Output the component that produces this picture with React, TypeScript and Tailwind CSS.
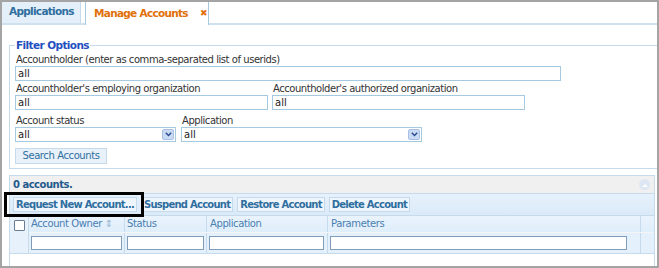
import React from "react";

const font = { fontFamily: '"DejaVu Sans", Verdana, sans-serif' };

function Field({ label, width, className = "" }: { label: string; width: string; className?: string }) {
  return (
    <div className={"flex flex-col " + className}>
      <div className="text-[10px] leading-[12px] tracking-[-0.45px] text-[#333] pl-[1px]">{label}</div>
      <div className={"h-[15px] border border-[#a6c9e2] bg-white text-[10px] leading-[13px] pl-[2px] text-[#222] " + width}>all</div>
    </div>
  );
}

function SelectBox({ label, width, className = "" }: { label: string; width: string; className?: string }) {
  return (
    <div className={"flex flex-col " + className}>
      <div className="text-[10px] leading-[12px] tracking-[-0.45px] text-[#333] pl-[1px]">{label}</div>
      <div className={"h-[15px] border border-[#a6c9e2] bg-white flex items-center justify-between " + width}>
        <span className="text-[10px] leading-[13px] pl-[2px] text-[#222]">all</span>
        <span className="w-[12px] h-[11px] mr-[1px] bg-[#c9daf3] border border-[#a9c0e6] rounded-[2px] flex items-center justify-center">
          <svg width="7" height="5" viewBox="0 0 7 5"><path d="M0.8 0.8 L3.5 3.6 L6.2 0.8" stroke="#2a4a90" strokeWidth="1.4" fill="none" /></svg>
        </span>
      </div>
    </div>
  );
}

function TbBtn({ children }: { children: React.ReactNode }) {
  return (
    <div className="h-[15px] px-[2px] border border-[#c5dbec] bg-[#eef5fd] text-[10px] leading-[13px] tracking-[-0.75px] font-bold text-[#2e6e9e] whitespace-nowrap">
      {children}
    </div>
  );
}

export default function App() {
  return (
    <div className="w-[659px] h-[268px] bg-[#a4a4a4] pt-[2px] pl-[2px] pr-[2px] pb-[2px]" style={font}>
      <div className="relative w-full h-full bg-white overflow-hidden flex flex-col">
        {/* tabs */}
        <div className="h-[23px] flex items-end border-b-2 border-[#cfe0ee] shrink-0">
          <div className="h-[23px] w-[79px] shrink-0 bg-[#e4eff9] border border-[#c5dbec] border-l-0 border-b-0 flex items-center pl-[7px] text-[10.5px] tracking-[-0.7px] font-bold text-[#2e6e9e] whitespace-nowrap">
            Applications
          </div>
          <div className="ml-[4px] w-[124px] shrink-0 overflow-hidden bg-white border border-[#a6c9e2] border-b-0 -mb-[2px] h-[24px] flex items-center pl-[8px] text-[10.5px] tracking-[-0.7px] font-bold text-[#e17009] whitespace-nowrap">
            <span>Manage Accounts</span>
            <span className="ml-[12px] text-[9px]">✖</span>
          </div>
        </div>

        {/* filter fieldset */}
        <fieldset className="mt-[14px] ml-[7px] mr-[-10px] border border-[#c5dbec] px-[5px] pb-[4px] shrink-0">
          <legend className="px-[1px] text-[10.5px] tracking-[-0.6px] font-bold text-[#1f4fbf] leading-[12px]">Filter Options</legend>
          <Field label="Accountholder (enter as comma-separated list of userids)" width="w-[546px]" className="mt-[3px]" />
          <div className="flex gap-[4px] mt-[2px]">
            <Field label="Accountholder's employing organization" width="w-[253px]" />
            <Field label="Accountholder's authorized organization" width="w-[253px]" />
          </div>
          <div className="flex gap-[5px] mt-[5px]">
            <SelectBox label="Account status" width="w-[161px]" />
            <SelectBox label="Application" width="w-[241px]" />
          </div>
          <div className="mt-[6px] w-[92px] h-[16px] border border-[#c5dbec] bg-[#e8f1fa] text-[10px] leading-[14px] tracking-[-0.4px] text-[#2e6e9e] flex items-center justify-center">
            Search Accounts
          </div>
        </fieldset>

        {/* grid */}
        <div className="mt-[6px] ml-[7px] mr-[2px] border border-[#c5dbec] border-b-0 flex-1 flex flex-col">
          <div className="h-[18px] bg-[#f0f0f0] flex items-center justify-between px-[3px] border-b border-[#c5dbec]">
            <span className="text-[10px] tracking-[-0.5px] font-bold text-[#1f5a8c]">0 accounts.</span>
            <span className="w-[11px] h-[11px] rounded-full bg-[#dde7f3] mr-[1px] flex items-center justify-center">
              <svg width="6" height="4" viewBox="0 0 6 4"><path d="M0 4 L3 1 L6 4 Z" fill="#fff" /></svg>
            </span>
          </div>
          <div className="h-[22px] bg-gradient-to-b from-[#e6f1fc] to-[#dbeaf8] flex items-center gap-[4px] px-[3px] border-b border-[#c5dbec]">
            <TbBtn>Request New Account...</TbBtn>
            <TbBtn>Suspend Account</TbBtn>
            <TbBtn>Restore Account</TbBtn>
            <TbBtn>Delete Account</TbBtn>
          </div>
          <div className="flex bg-[#e6f1fc] border-b border-[#c5dbec]">
            <div className="w-[19px] flex flex-col items-center border-r border-[#c5dbec]">
              <div className="mt-[4px] w-[11px] h-[11px] border border-[#6a7d92] bg-white rounded-[1px]" />
            </div>
            <div className="flex-1 flex flex-col">
              <div className="flex h-[16px] bg-gradient-to-b from-[#e9f3fd] to-[#dfeefb] text-[10px] leading-[16px] tracking-[-0.4px] text-[#4a7eb0] whitespace-nowrap">
                <div className="w-[96px] pl-[2px] border-r border-[#c5dbec]">Account Owner <span className="text-[#9ab7d3]">⇕</span></div>
                <div className="w-[82px] pl-[2px] border-r border-[#c5dbec]">Status</div>
                <div className="w-[121px] pl-[3px] border-r border-[#c5dbec]">Application</div>
                <div className="w-[313px] pl-[3px] border-r border-[#c5dbec]">Parameters</div>
                <div className="flex-1" />
              </div>
              <div className="flex h-[21px] items-center bg-[#e4f0fb] border-t border-[#f5f5f5]">
                <div className="w-[96px] h-full flex items-center pl-[2px] border-r border-[#c5dbec]"><div className="w-[91px] h-[14px] border border-[#7f9db9] bg-white" /></div>
                <div className="w-[82px] h-full flex items-center pl-[2px] border-r border-[#c5dbec]"><div className="w-[77px] h-[14px] border border-[#7f9db9] bg-white" /></div>
                <div className="w-[121px] h-full flex items-center pl-[2px] border-r border-[#c5dbec]"><div className="w-[115px] h-[14px] border border-[#7f9db9] bg-white" /></div>
                <div className="w-[313px] h-full flex items-center pl-[2px] border-r border-[#c5dbec]"><div className="w-[297px] h-[14px] border border-[#7f9db9] bg-white" /></div>
                <div className="flex-1 h-full" />
              </div>
            </div>
          </div>
          <div className="flex-1 bg-white" />
        </div>

        {/* highlight annotation */}
        <div className="absolute left-[2px] top-[190px] w-[140px] h-[25px] border-[3px] border-black pointer-events-none" />
      </div>
    </div>
  );
}
